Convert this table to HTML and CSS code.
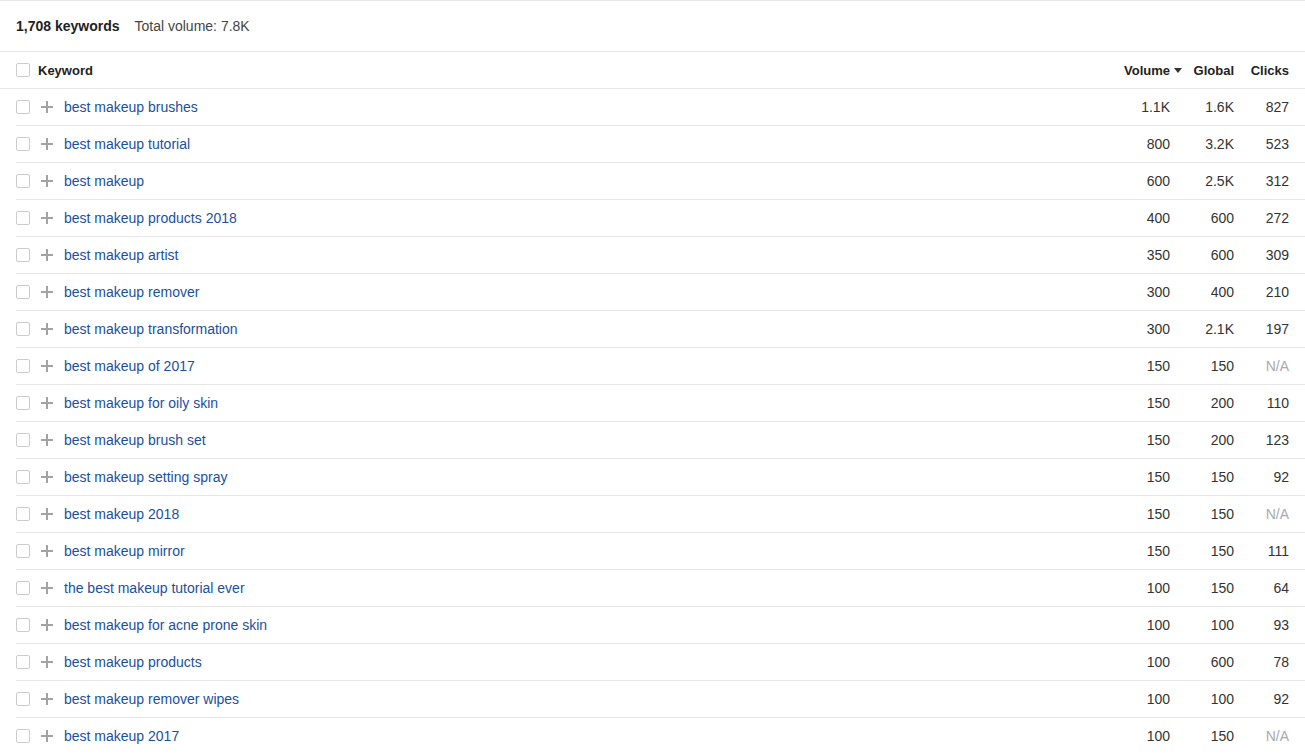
FILE: index.html
```html
<!DOCTYPE html>
<html>
<head>
<meta charset="utf-8">
<link rel="stylesheet" href="styles.css">
</head>
<body>
<div class="panel">
  <div class="summary">
    <span class="count">1,708 keywords</span>
    <span class="total">Total volume: 7.8K</span>
  </div>
  <div class="thead">
    <div class="kwcell"><span class="cb"></span><span class="hlabel">Keyword</span></div>
    <div class="num vol-h">Volume <span class="caret"></span></div>
    <div class="num">Global</div>
    <div class="num">Clicks</div>
  </div>
  <div class="tbody">
    <div class="row"><div class="kwcell"><span class="cb"></span><span class="plus"></span><a class="kw">best makeup brushes</a></div><div class="num vol">1.1K</div><div class="num">1.6K</div><div class="num">827</div></div>
    <div class="row"><div class="kwcell"><span class="cb"></span><span class="plus"></span><a class="kw">best makeup tutorial</a></div><div class="num vol">800</div><div class="num">3.2K</div><div class="num">523</div></div>
    <div class="row"><div class="kwcell"><span class="cb"></span><span class="plus"></span><a class="kw">best makeup</a></div><div class="num vol">600</div><div class="num">2.5K</div><div class="num">312</div></div>
    <div class="row"><div class="kwcell"><span class="cb"></span><span class="plus"></span><a class="kw">best makeup products 2018</a></div><div class="num vol">400</div><div class="num">600</div><div class="num">272</div></div>
    <div class="row"><div class="kwcell"><span class="cb"></span><span class="plus"></span><a class="kw">best makeup artist</a></div><div class="num vol">350</div><div class="num">600</div><div class="num">309</div></div>
    <div class="row"><div class="kwcell"><span class="cb"></span><span class="plus"></span><a class="kw">best makeup remover</a></div><div class="num vol">300</div><div class="num">400</div><div class="num">210</div></div>
    <div class="row"><div class="kwcell"><span class="cb"></span><span class="plus"></span><a class="kw">best makeup transformation</a></div><div class="num vol">300</div><div class="num">2.1K</div><div class="num">197</div></div>
    <div class="row"><div class="kwcell"><span class="cb"></span><span class="plus"></span><a class="kw">best makeup of 2017</a></div><div class="num vol">150</div><div class="num">150</div><div class="num na">N/A</div></div>
    <div class="row"><div class="kwcell"><span class="cb"></span><span class="plus"></span><a class="kw">best makeup for oily skin</a></div><div class="num vol">150</div><div class="num">200</div><div class="num">110</div></div>
    <div class="row"><div class="kwcell"><span class="cb"></span><span class="plus"></span><a class="kw">best makeup brush set</a></div><div class="num vol">150</div><div class="num">200</div><div class="num">123</div></div>
    <div class="row"><div class="kwcell"><span class="cb"></span><span class="plus"></span><a class="kw">best makeup setting spray</a></div><div class="num vol">150</div><div class="num">150</div><div class="num">92</div></div>
    <div class="row"><div class="kwcell"><span class="cb"></span><span class="plus"></span><a class="kw">best makeup 2018</a></div><div class="num vol">150</div><div class="num">150</div><div class="num na">N/A</div></div>
    <div class="row"><div class="kwcell"><span class="cb"></span><span class="plus"></span><a class="kw">best makeup mirror</a></div><div class="num vol">150</div><div class="num">150</div><div class="num">111</div></div>
    <div class="row"><div class="kwcell"><span class="cb"></span><span class="plus"></span><a class="kw">the best makeup tutorial ever</a></div><div class="num vol">100</div><div class="num">150</div><div class="num">64</div></div>
    <div class="row"><div class="kwcell"><span class="cb"></span><span class="plus"></span><a class="kw">best makeup for acne prone skin</a></div><div class="num vol">100</div><div class="num">100</div><div class="num">93</div></div>
    <div class="row"><div class="kwcell"><span class="cb"></span><span class="plus"></span><a class="kw">best makeup products</a></div><div class="num vol">100</div><div class="num">600</div><div class="num">78</div></div>
    <div class="row"><div class="kwcell"><span class="cb"></span><span class="plus"></span><a class="kw">best makeup remover wipes</a></div><div class="num vol">100</div><div class="num">100</div><div class="num">92</div></div>
    <div class="row"><div class="kwcell"><span class="cb"></span><span class="plus"></span><a class="kw">best makeup 2017</a></div><div class="num vol">100</div><div class="num">150</div><div class="num na">N/A</div></div>
  </div>
</div>
</body>
</html>
```
FILE: styles.css
```css
* { box-sizing: border-box; }
html, body { margin: 0; padding: 0; background: #fff; }
body {
  font-family: "Liberation Sans", Arial, Helvetica, sans-serif;
  font-size: 14px;
  color: #333;
  overflow: hidden;
}
.panel {
  border-top: 1px solid #e6e6e6;
}
.summary {
  height: 51px;
  display: flex;
  align-items: center;
  gap: 15px;
  padding: 0 16px 1px;
  border-bottom: 1px solid #e6e6e6;
}
.count { font-weight: bold; color: #222; }
.total { color: #444; }

.thead, .row {
  display: grid;
  grid-template-columns: 1fr 66px 52px 55px;
  align-items: center;
}
.thead {
  height: 37px;
  padding: 0 16px;
  border-bottom: 1px solid #e6e6e6;
  font-size: 13px;
  font-weight: bold;
  color: #222;
}
.row {
  height: 37px;
  margin-left: 16px;
  padding-right: 16px;
  border-bottom: 1px solid #e6e6e6;
}
.kwcell {
  display: flex;
  align-items: center;
}
.cb {
  width: 14px;
  height: 14px;
  border: 1px solid #cccccc;
  border-radius: 2px;
  background: #fff;
  flex: none;
}
.hlabel { margin-left: 8px; }
.plus {
  position: relative;
  width: 12px;
  height: 12px;
  margin-left: 11px;
  flex: none;
}
.plus::before, .plus::after {
  content: "";
  position: absolute;
  background: #a3a3a3;
}
.plus::before { left: 0; right: 0; top: 5px; height: 2px; }
.plus::after { top: 0; bottom: 0; left: 5px; width: 2px; }
.kw {
  margin-left: 11px;
  color: #1b4fa0;
  text-decoration: none;
  white-space: nowrap;
}
.num { text-align: right; white-space: nowrap; }
.vol { padding-right: 12px; }
.vol-h { display: flex; justify-content: flex-end; align-items: center; }
.caret {
  width: 0;
  height: 0;
  margin-left: 4px;
  border-left: 4px solid transparent;
  border-right: 4px solid transparent;
  border-top: 5px solid #333;
}
.na { color: #aaa; }
```
